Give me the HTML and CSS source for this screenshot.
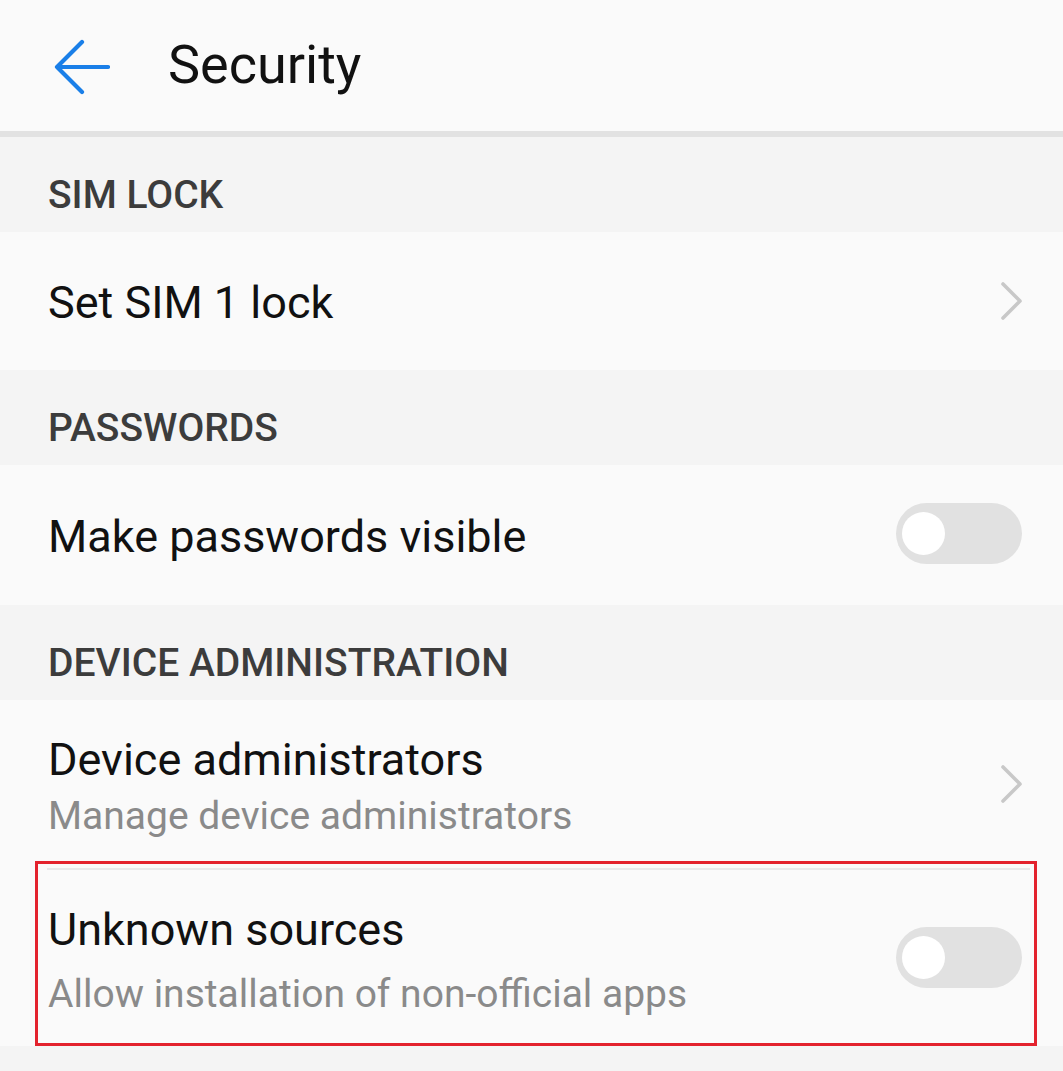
FILE: index.html
```html
<!DOCTYPE html>
<html>
<head>
<meta charset="utf-8">
<link rel="stylesheet" href="styles.css">
</head>
<body>
<div class="page">
  <header class="topbar">
    <svg class="back" width="56" height="56" viewBox="0 0 56 56">
      <path d="M54 28 H3 M28 3 L3 28 L28 53" fill="none" stroke="#1a7fe8" stroke-width="4.2" stroke-linecap="round" stroke-linejoin="round"/>
    </svg>
    <h1 class="title">Security</h1>
  </header>

  <div class="section">SIM LOCK</div>
  <div class="row row-single sim">
    <div class="label">Set SIM 1 lock</div>
    <svg class="chev" width="22" height="38" viewBox="0 0 22 38"><path d="M2 2 L19 19 L2 36" fill="none" stroke="#c8c8c8" stroke-width="3.6" stroke-linecap="round" stroke-linejoin="round"/></svg>
  </div>

  <div class="section">PASSWORDS</div>
  <div class="row row-single pw">
    <div class="label">Make passwords visible</div>
    <div class="toggle"><span class="thumb"></span></div>
  </div>

  <div class="section">DEVICE ADMINISTRATION</div>
  <div class="row row-double admin">
    <div class="texts">
      <div class="label">Device administrators</div>
      <div class="sub">Manage device administrators</div>
    </div>
    <svg class="chev" width="22" height="38" viewBox="0 0 22 38"><path d="M2 2 L19 19 L2 36" fill="none" stroke="#c8c8c8" stroke-width="3.6" stroke-linecap="round" stroke-linejoin="round"/></svg>
  </div>
  <div class="row row-double unknown">
    <div class="texts">
      <div class="label">Unknown sources</div>
      <div class="sub">Allow installation of non-official apps</div>
    </div>
    <div class="toggle"><span class="thumb"></span></div>
    <div class="highlight"></div>
  </div>
  <div class="rest"></div>
</div>
</body>
</html>
```

FILE: styles.css
```css
html, body {
  margin: 0;
  padding: 0;
  background: #f4f4f4;
}
.page {
  width: 1063px;
  font-family: Roboto, "Noto Sans", sans-serif;
}
.topbar {
  height: 131px;
  background: #fafafa;
  border-bottom: 6px solid #e2e2e2;
  display: flex;
  align-items: center;
  padding-left: 54px;
}
.back {
  display: block;
  margin-top: 2px;
}
.title {
  margin: 0 0 0 58px;
  font-weight: 400;
  font-size: 54px;
  line-height: 54px;
  color: #111;
  padding-bottom: 1px;
}
.section {
  height: 95px;
  box-sizing: border-box;
  padding: 39px 0 0 48px;
  font-size: 39px;
  line-height: 39px;
  font-weight: 500;
  color: #3c3c3c;
  background: #f4f4f4;
}
.row {
  background: #fafafa;
  display: flex;
  align-items: center;
  padding: 0 40px 0 48px;
  position: relative;
  box-sizing: border-box;
}
.label {
  font-size: 45px;
  line-height: 45px;
  color: #111;
}
.row-single .label { flex: 1; padding-top: 3px; }
.sim { height: 138px; }
.pw { height: 140px; }
.chev { display: block; }
.admin { height: 168px; }
.unknown { height: 178px; }
.unknown::before {
  content: "";
  position: absolute;
  left: 47px;
  right: 33px;
  top: 0;
  height: 2px;
  background: #e8e8ea;
}
.texts {
  flex: 1;
  align-self: flex-start;
}
.sub {
  font-size: 39px;
  line-height: 39px;
  color: #8a8a8a;
}
.admin .texts { padding-top: 37px; }
.admin .sub { margin-top: 15px; }
.unknown .texts { padding-top: 39px; }
.unknown .sub { margin-top: 23px; }
.toggle {
  width: 126px;
  height: 61px;
  border-radius: 31px;
  background: #e1e1e1;
  position: relative;
  margin-right: 1px;
}
.thumb {
  position: absolute;
  left: 6px;
  top: 9px;
  width: 43px;
  height: 43px;
  border-radius: 50%;
  background: #fff;
}
.pw .toggle { margin-top: -3px; }
.highlight {
  position: absolute;
  left: 35px;
  right: 26px;
  top: -7px;
  bottom: 0;
  border: 3px solid #e3222d;
  pointer-events: none;
}
.rest {
  height: 40px;
  background: #f4f4f4;
}
```
